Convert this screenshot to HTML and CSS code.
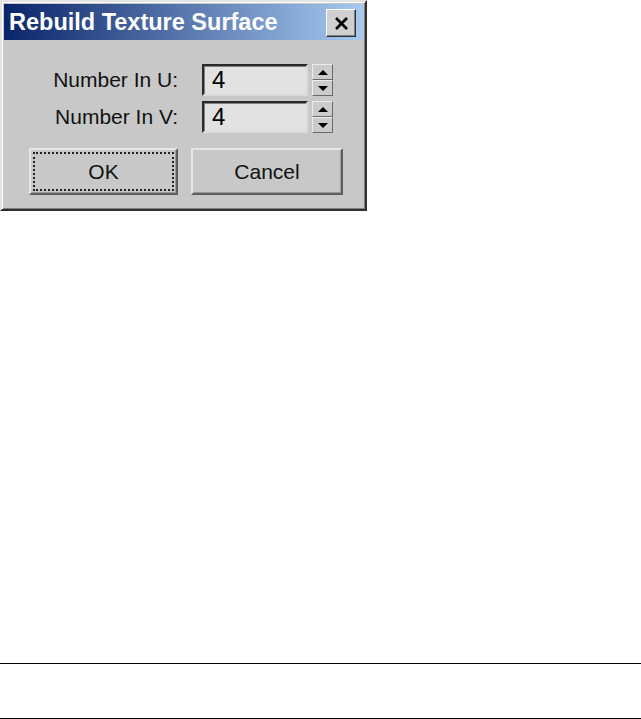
FILE: index.html
```html
<!DOCTYPE html>
<html lang="en">
<head>
    <meta charset="UTF-8">
    <meta name="viewport" content="width=device-width, initial-scale=1.0">
    <title>Rebuild Texture Surface</title>
    <link rel="stylesheet" href="styles.css">
</head>
<body>
    <div class="dialog">
        <div class="titlebar">
            <span class="title">Rebuild Texture Surface</span>
            <button class="close-btn" aria-label="Close">
                <svg width="15" height="13" viewBox="0 0 15 13">
                    <path d="M2 1 L13 12 M13 1 L2 12" stroke="#000" stroke-width="2.6" fill="none"/>
                </svg>
            </button>
        </div>
        <div class="dialog-body">
            <div class="field-row">
                <label class="field-label">Number In U:</label>
                <div class="num-input">4</div>
                <div class="spinner">
                    <span class="spin spin-up"></span>
                    <span class="spin spin-down"></span>
                </div>
            </div>
            <div class="field-row">
                <label class="field-label">Number In V:</label>
                <div class="num-input">4</div>
                <div class="spinner">
                    <span class="spin spin-up"></span>
                    <span class="spin spin-down"></span>
                </div>
            </div>
            <div class="button-row">
                <button class="btn btn-default">OK</button>
                <button class="btn btn-cancel">Cancel</button>
            </div>
        </div>
    </div>
    <div class="footer-rule"></div>
</body>
</html>
```

FILE: styles.css
```css
body {
    margin: 0;
    padding: 0;
    background-color: #fff;
    font-family: 'Liberation Sans', Arial, sans-serif;
    color: #000;
}

.dialog {
    box-sizing: border-box;
    width: 367px;
    height: 211px;
    padding: 2px;
    background-color: #c8c8c8;
    border: 2px solid;
    border-color: #e4e4e4 #303030 #303030 #e4e4e4;
    box-shadow: inset 1px 1px #fff, inset -1px -1px #808080;
    display: flex;
    flex-direction: column;
}

.titlebar {
    height: 36px;
    display: flex;
    align-items: center;
    justify-content: space-between;
    padding: 0 7px 0 5px;
    background: linear-gradient(to right, #0a246a, #a6caf0);
}

.title {
    color: #fff;
    font-weight: bold;
    font-size: 23.5px;
}

.close-btn {
    box-sizing: border-box;
    width: 30px;
    height: 28px;
    margin-top: 2px;
    padding: 0;
    display: flex;
    align-items: center;
    justify-content: center;
    background-color: #d0d0d0;
    border: 1px solid;
    border-color: #fff #303030 #303030 #fff;
    box-shadow: inset -1px -1px #808080;
}

.dialog-body {
    flex: 1;
    padding: 24px 0 0 25px;
}

.field-row {
    display: flex;
    align-items: center;
    height: 32px;
    margin-bottom: 5px;
}

.field-label {
    width: 149px;
    text-align: right;
    font-size: 21px;
    color: #111;
}

.num-input {
    box-sizing: border-box;
    width: 106px;
    height: 32px;
    margin-left: 24px;
    padding: 0 0 0 8px;
    font-size: 24px;
    line-height: 28px;
    background-color: #e2e2e2;
    border: 2px solid;
    border-color: #2a2a2a #dadada #dadada #2a2a2a;
    box-shadow: inset 1px 1px #808080;
}

.spinner {
    display: flex;
    flex-direction: column;
    width: 21px;
    height: 32px;
    margin-left: 4px;
}

.spin {
    box-sizing: border-box;
    flex: 1;
    display: flex;
    align-items: center;
    justify-content: center;
    background-color: #cbcbcb;
    border: 1px solid;
    border-color: #ececec #6a6a6a #6a6a6a #ececec;
}

.spin::before {
    content: '';
    width: 0;
    height: 0;
    border-left: 5px solid transparent;
    border-right: 5px solid transparent;
}

.spin-up::before {
    border-bottom: 5px solid #000;
}

.spin-down::before {
    border-top: 5px solid #000;
}

.button-row {
    display: flex;
    gap: 13px;
    margin-top: 15px;
}

.btn {
    box-sizing: border-box;
    width: 149px;
    height: 47px;
    font-family: 'Liberation Sans', Arial, sans-serif;
    font-size: 21px;
    color: #111;
    background-color: #c8c8c8;
    border: 2px solid;
    border-color: #e6e6e6 #5e5e5e #5e5e5e #e6e6e6;
    box-shadow: inset -1px -1px #9a9a9a;
    padding: 0;
}

.btn-cancel {
    width: 152px;
}

.btn-default {
    outline: 2px dotted #222;
    outline-offset: -6px;
}

.footer-rule {
    height: 54px;
    margin-top: 452px;
    border-top: 1px solid #000;
    border-bottom: 1px solid #000;
}
```
